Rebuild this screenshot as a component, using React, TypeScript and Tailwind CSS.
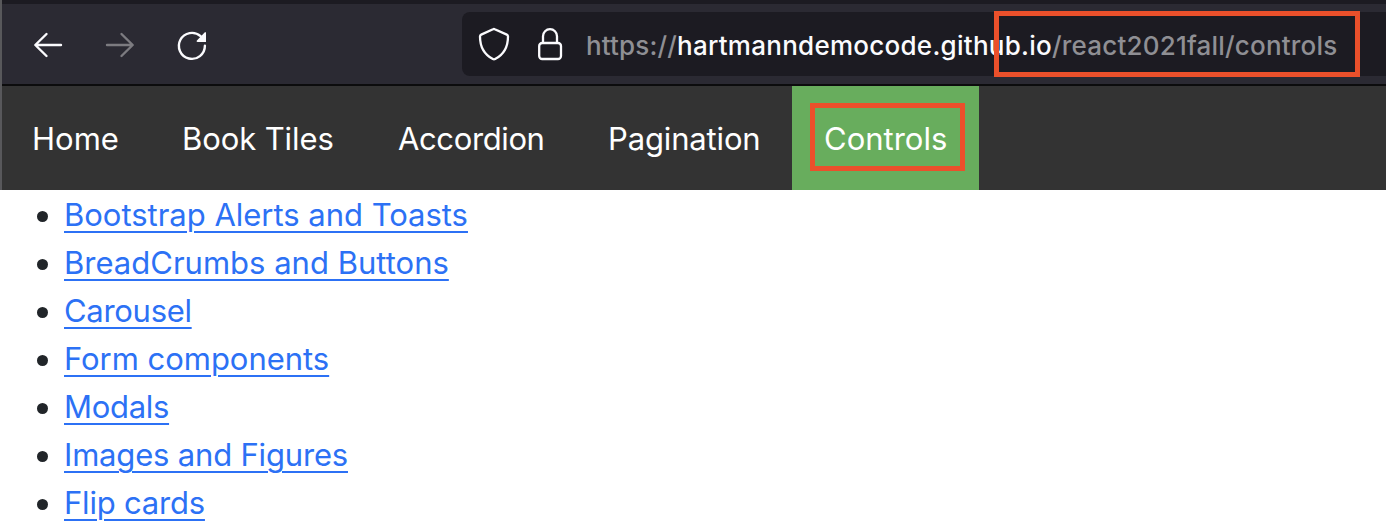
const navItems = [
  { label: 'Home', box: 'w-[150px]', text: 'tracking-[0px]' },
  { label: 'Book Tiles', box: 'w-[216px]', text: 'tracking-[-0.1px]' },
  { label: 'Accordion', box: 'w-[210px]', text: 'tracking-[-0.38px]' },
  { label: 'Pagination', box: 'w-[216px]', text: 'tracking-[-0.15px]' },
  { label: 'Controls', box: 'w-[187px] bg-[#68ad5d]', text: 'tracking-[0px]', marked: true },
];

const links = [
  { label: 'Bootstrap Alerts and Toasts', text: 'tracking-[-0.02px]' },
  { label: 'BreadCrumbs and Buttons', text: 'tracking-[0.01px]' },
  { label: 'Carousel', text: 'tracking-[-0.3px]' },
  { label: 'Form components', text: 'tracking-[-0.03px]' },
  { label: 'Modals', text: 'tracking-[-0.3px]' },
  { label: 'Images and Figures', text: 'tracking-[-0.18px]' },
  { label: 'Flip cards', text: 'tracking-[-0.2px]' },
];

function BackIcon() {
  return (
    <svg className="h-8 w-8" viewBox="0 0 32 32" fill="none" stroke="#fbfbfe" strokeWidth="2.4" strokeLinecap="round" strokeLinejoin="round">
      <path d="M29 15H3.500M14.500 4L3.300 15l11.200 11" />
    </svg>
  );
}

function ForwardIcon() {
  return (
    <svg className="h-8 w-8" viewBox="0 0 32 32" fill="none" stroke="#7c7b80" strokeWidth="2.4" strokeLinecap="round" strokeLinejoin="round">
      <path d="M3 15h25.500M17.500 4l11.200 11-11.200 11" />
    </svg>
  );
}

function ReloadIcon() {
  return (
    <svg className="h-8 w-8" viewBox="0 0 32 32">
      <path d="M28.900 15.800A13 13 0 1 1 24.600 6.200" fill="none" stroke="#fbfbfe" strokeWidth="2.4" strokeLinecap="round" />
      <path d="M30 2.600v9.400H21.600c-1 0-1.300-.9-.7-1.500l7.700-8c.5-.5 1.400-.4 1.400.1z" fill="#fbfbfe" />
    </svg>
  );
}

function ShieldIcon() {
  return (
    <svg className="h-9 w-8" viewBox="0 0 32 36" fill="none" stroke="#fbfbfe" strokeWidth="2.3" strokeLinejoin="round">
      <path d="M15 3.200c.6-.3 1.200-.3 1.800 0l12 5.400c.8.4 1.200 1 1.200 1.800 0 10-4.700 18.300-12.900 22.600-.7.4-1.500.4-2.200 0C6.700 28.700 2 20.400 2 10.400c0-.8.4-1.400 1.200-1.800z" />
    </svg>
  );
}

function LockIcon() {
  return (
    <svg className="h-9 w-8" viewBox="0 0 32 36" fill="none" stroke="#fbfbfe" strokeWidth="2.3">
      <rect x="5.200" y="17" width="21.800" height="16" rx="3" />
      <path d="M9 17v-6.800a7 7 0 0 1 14 0v6.800" />
    </svg>
  );
}

export default function App() {
  return (
    <div className="h-[532px] w-full overflow-hidden bg-white font-['Inter',sans-serif]">
      <div className="border-l-2 border-[#58585b]">
        <header className="flex h-[86px] items-center border-t-4 border-b-2 border-t-[#1c1b22] border-b-[#0c0c0d] bg-[#2b2a33]">
          <div className="flex w-[460px] items-center gap-10 pl-[30px] pt-1">
            <BackIcon />
            <ForwardIcon />
            <ReloadIcon />
          </div>
          <div className="relative flex h-16 flex-1 items-center rounded-l-lg bg-[#1c1b22] pl-4">
            <ShieldIcon />
            <div className="ml-6">
              <LockIcon />
            </div>
            <p className="ml-5 whitespace-nowrap pt-1 text-[26px] leading-8 font-medium text-[#8f8f94]">
              <span className="tracking-[0.15px]">https://</span>
              <span className="tracking-[0.27px] text-[#fbfbfe]">hartmanndemocode.github.io</span>
              <span className="tracking-[0.2px]">/react2021fall/controls</span>
            </p>
            <div className="absolute -top-px left-[532px] h-[66px] w-[366px] border-[5px] border-[#eb502b]" />
          </div>
        </header>
        <nav className="-ml-0.5 flex h-[104px] border-l-2 border-[#58585b] bg-[#333] text-[31px] leading-[106px] text-white">
          {navItems.map((item, i) => (
            <a key={item.label} className={`relative pl-8 ${i === 0 ? '-ml-0.5 ' : ''}${item.box}`}>
              <span className={item.text}>{item.label}</span>
              {item.marked && <div className="absolute left-[18px] top-[17px] h-[68px] w-[155px] border-[5px] border-[#eb502b]" />}
            </a>
          ))}
        </nav>
      </div>
      <ul className="pl-[37px] pt-px text-[31px] leading-12 text-[#2c71f5]">
        {links.map((link) => (
          <li key={link.label} className="flex h-12 items-center">
            <span className="mt-[3px] mr-4 h-[11px] w-[11px] rounded-full bg-[#212529]" />
            <a className={`underline decoration-2 underline-offset-[5px] ${link.text}`}>{link.label}</a>
          </li>
        ))}
      </ul>
    </div>
  );
}
